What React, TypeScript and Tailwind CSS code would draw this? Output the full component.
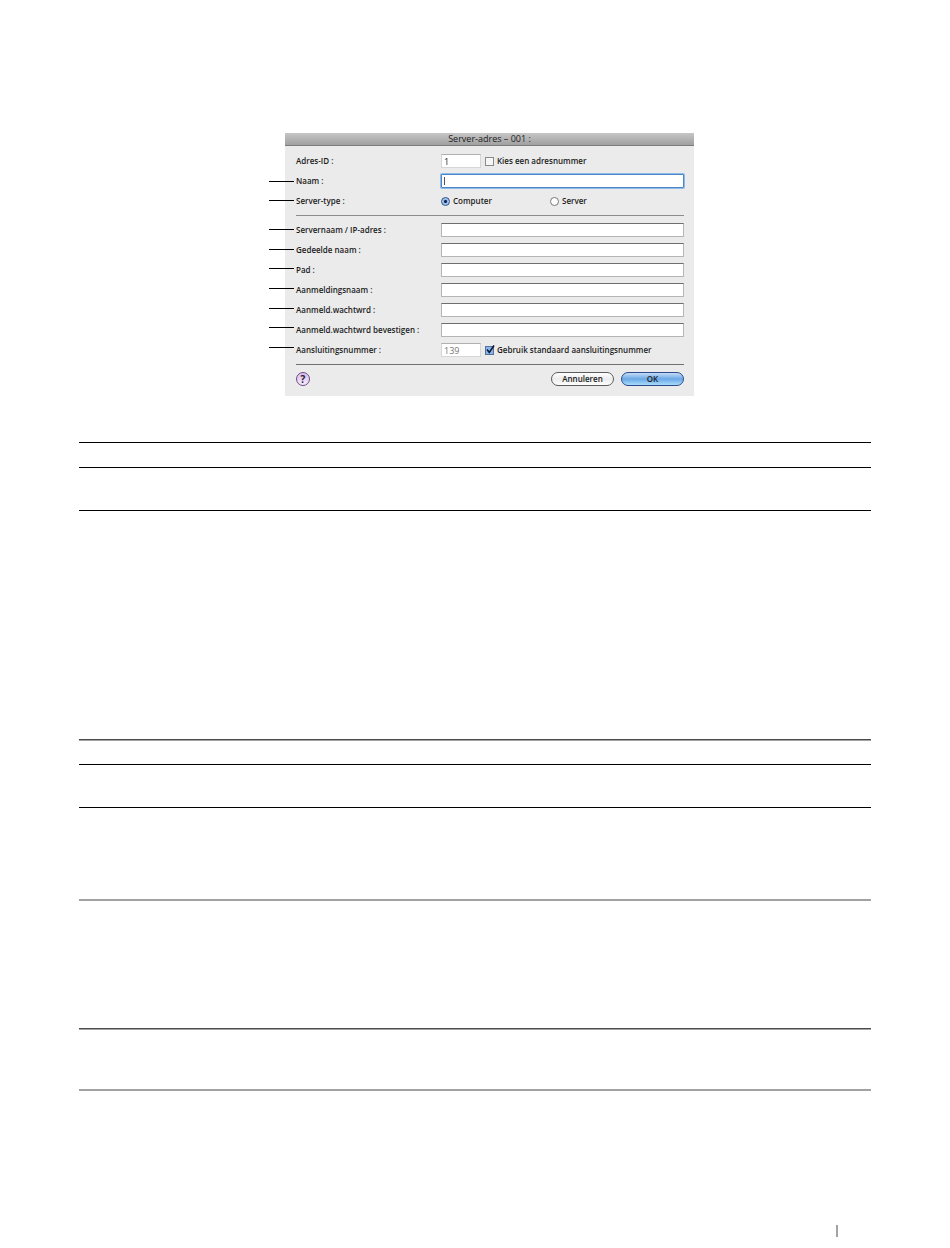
import React, { useState } from 'react';

interface IField {
  id: string;
  label: string;
  type: string;
}

const FIELDS: IField[] = [
  { id: 'server', label: 'Servernaam / IP-adres :', type: 'text' },
  { id: 'share', label: 'Gedeelde naam :', type: 'text' },
  { id: 'path', label: 'Pad :', type: 'text' },
  { id: 'login', label: 'Aanmeldingsnaam :', type: 'text' },
  { id: 'password', label: 'Aanmeld.wachtwrd :', type: 'password' },
  { id: 'confirm', label: 'Aanmeld.wachtwrd bevestigen :', type: 'password' },
];

const INPUT =
  'h-[14px] w-full border border-[#b5b5b5] border-t-[#6e6e6e] bg-white px-1 outline-none';
const SMALL_INPUT =
  'h-[14px] w-10 border border-[#d6d6d6] border-t-[#b0b0b0] bg-white px-[2px] text-[9px] leading-3 font-normal outline-none';
const RADIO =
  'h-[9px] w-[9px] shrink-0 appearance-none rounded-full border border-[#777] bg-white checked:border-[#2c4a80] checked:bg-[radial-gradient(circle,#10204a_0_1px,#8fb9ea_2px,#b9d8f8_4px)]';

const Row = ({
  label,
  htmlFor,
  children,
}: {
  label: string;
  htmlFor?: string;
  children: React.ReactNode;
}) => (
  <div className="flex h-5 items-center">
    <label htmlFor={htmlFor} className="w-[145px] shrink-0 whitespace-nowrap">
      {label}
    </label>
    <div className="flex min-w-0 flex-1 items-center">{children}</div>
  </div>
);

const Callouts = ({ count, className }: { count: number; className: string }) => (
  <div className={`absolute -left-4 flex w-[25px] flex-col justify-between ${className}`}>
    {Array.from({ length: count }, (_, i) => (
      <span key={i} className="h-px shrink-0 bg-black" />
    ))}
  </div>
);

const ServerDialog = () => {
  const [type, setType] = useState<string>('computer');
  const [pickNumber, setPickNumber] = useState<boolean>(false);
  const [defaultPort, setDefaultPort] = useState<boolean>(true);

  return (
    <form
      className="bg-[#ebebeb] text-[8px] leading-3 font-semibold text-[#1c1c1c]"
      onSubmit={(e) => e.preventDefault()}
    >
      <h1 className="h-[13px] border-b border-[#7c7c7c] bg-linear-to-b from-[#c6c6c6] to-[#a0a0a0] text-center text-[9px] font-medium">
        Server-adres – 001 :
      </h1>

      <div className="pt-[5px] pr-[10px] pl-[11px]">
        <Row label="Adres-ID :" htmlFor="adres-id">
          <input id="adres-id" className={SMALL_INPUT} defaultValue="1" />
          <label className="ml-1 flex items-center gap-[3px]">
            <input
              type="checkbox"
              className="h-[9px] w-[9px] appearance-none border border-[#8a8a8a] bg-[#f6f6f6]"
              checked={pickNumber}
              onChange={() => setPickNumber(!pickNumber)}
            />
            Kies een adresnummer
          </label>
        </Row>
        <Row label="Naam :" htmlFor="naam">
          <div className="relative flex w-full">
            <input
              id="naam"
              className="h-[14px] w-full rounded-[1px] border border-[#4a86c8] bg-white px-1 ring-1 ring-[#8fb9e6] outline-none"
            />
            <span className="absolute top-[3px] left-[3px] h-2 w-px bg-[#555]" />
          </div>
        </Row>
        <Row label="Server-type :">
          <label className="flex w-[109px] items-center gap-[3px]">
            <input
              type="radio"
              name="type"
              className={RADIO}
              checked={type === 'computer'}
              onChange={() => setType('computer')}
            />
            Computer
          </label>
          <label className="flex items-center gap-[3px]">
            <input
              type="radio"
              name="type"
              className={RADIO}
              checked={type === 'server'}
              onChange={() => setType('server')}
            />
            Server
          </label>
        </Row>

        <div className="my-1 h-px bg-[#8c8c8c]" />

        {FIELDS.map(({ id, label, type }) => (
          <Row key={id} label={label} htmlFor={id}>
            <input id={id} type={type} className={INPUT} />
          </Row>
        ))}
        <Row label="Aansluitingsnummer :" htmlFor="port">
          <input
            id="port"
            className={`${SMALL_INPUT} text-[#777]`}
            defaultValue="139"
            disabled={defaultPort}
          />
          <label className="ml-1 flex items-center gap-[3px]">
            <span className="relative flex">
              <input
                type="checkbox"
                className="h-[9px] w-[9px] appearance-none border border-[#5a6f94] bg-[#f6f6f6] checked:bg-[#86b8ee]"
                checked={defaultPort}
                onChange={() => setDefaultPort(!defaultPort)}
              />
              {defaultPort && (
                <svg
                  viewBox="0 0 11 11"
                  className="pointer-events-none absolute -top-[2px] left-0 h-[11px] w-[11px]"
                >
                  <path d="M2 5.5 L4.3 8.5 L9 1.5" fill="none" stroke="#0d1836" strokeWidth="1.6" />
                </svg>
              )}
            </span>
            Gebruik standaard aansluitingsnummer
          </label>
        </Row>

        <div className="mt-1 h-px bg-[#707070]" />

        <div className="flex h-[31px] items-center pb-1">
          <button
            type="button"
            aria-label="Help"
            className="flex h-[14px] w-[14px] items-center justify-center rounded-full border border-[#6b4a86] bg-linear-to-b from-[#d9bdea] to-[#f6ebfb] text-[10px] font-bold text-[#2a1638]"
          >
            ?
          </button>
          <button
            type="button"
            className="mr-[7px] ml-auto flex h-[14px] w-[63px] items-center justify-center rounded-full border border-[#5c5c5c] bg-linear-to-b from-white via-[#ececec] to-white"
          >
            Annuleren
          </button>
          <button
            type="submit"
            className="flex h-[14px] w-[63px] items-center justify-center rounded-full border border-[#2b4b8c] bg-linear-to-b from-[#c4dcf6] via-[#6aa8e6] to-[#a9dbfa]"
          >
            OK
          </button>
        </div>
      </div>
    </form>
  );
};

const THIN = 'h-px border-0 bg-black';
const SOFT = 'h-[2px] border-0 bg-[#a2a2a2]';
// dark line with a lighter lower edge
const EDGED = 'h-[2px] border-0 border-b border-[#a2a2a2] bg-[#4c4c4c]';

const App = () => {
  return (
    <main className="min-h-screen bg-white px-[79px] pt-[133px] pb-3 font-['Open_Sans','Noto_Sans',sans-serif]">
      <div className="relative ml-[206px] max-w-[409px]">
        <ServerDialog />
        <Callouts count={2} className="top-12 h-5" />
        <Callouts count={7} className="top-24 h-[119px]" />
      </div>

      <section className="mt-[46px]">
        <hr className={THIN} />
        <hr className={`mt-6 ${THIN}`} />
        <hr className={`mt-[42px] ${THIN}`} />
      </section>

      <section className="mt-[228px]">
        <hr className={EDGED} />
        <hr className={`mt-[23px] ${THIN}`} />
        <hr className={`mt-[42px] ${THIN}`} />
        <hr className={`mt-[91px] ${SOFT}`} />
        <hr className={`mt-[127px] ${EDGED}`} />
        <hr className={`mt-[59px] ${SOFT}`} />
      </section>

      <footer className="mt-[134px] flex justify-end pr-[33px]">
        <span className="h-3 w-[2px] bg-[#a2a2a2]" />
      </footer>
    </main>
  );
};

export default App;
